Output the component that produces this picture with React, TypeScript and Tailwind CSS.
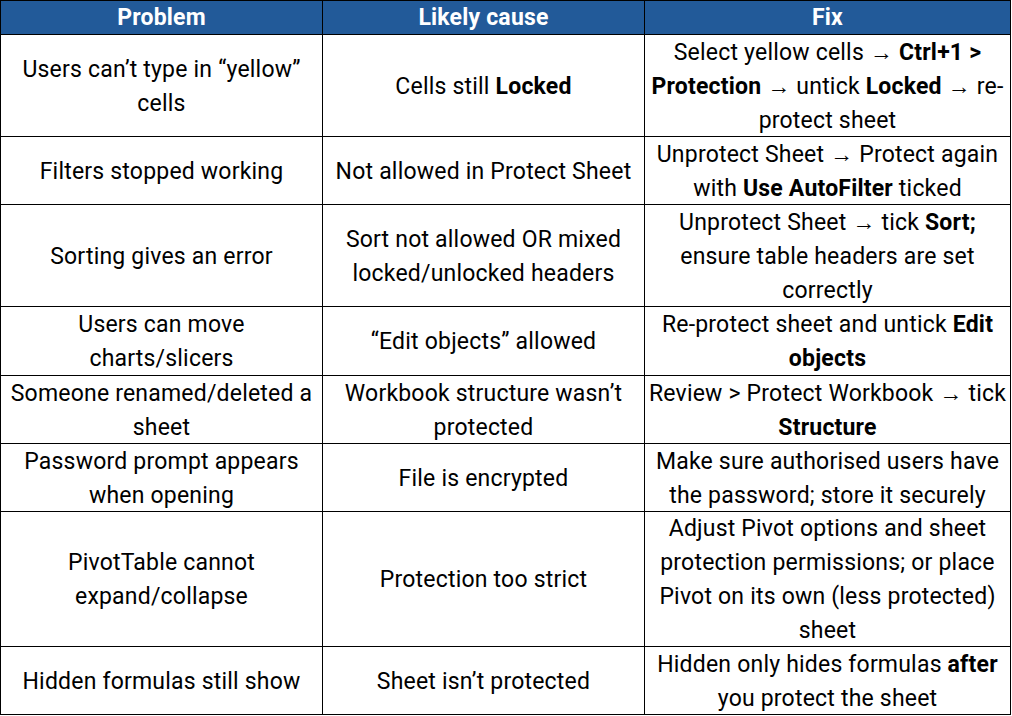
import React from "react";

type Seg = string | { b: string };
type Line = Seg[];

const B = (t: string) => ({ b: t });

const rows: { h: number; p: Line[]; c: Line[]; f: Line[] }[] = [
  {
    h: 102,
    p: [["Users can’t type in “yellow”"], ["cells"]],
    c: [["Cells still ", B("Locked")]],
    f: [
      ["Select yellow cells → ", B("Ctrl+1 >")],
      [B("Protection"), " → untick ", B("Locked"), " → re-"],
      ["protect sheet"],
    ],
  },
  {
    h: 68,
    p: [["Filters stopped working"]],
    c: [["Not allowed in Protect Sheet"]],
    f: [["Unprotect Sheet → Protect again"], ["with ", B("Use AutoFilter"), " ticked"]],
  },
  {
    h: 102,
    p: [["Sorting gives an error"]],
    c: [["Sort not allowed OR mixed"], ["locked/unlocked headers"]],
    f: [["Unprotect Sheet → tick ", B("Sort;")], ["ensure table headers are set"], ["correctly"]],
  },
  {
    h: 69,
    p: [["Users can move"], ["charts/slicers"]],
    c: [["“Edit objects” allowed"]],
    f: [["Re-protect sheet and untick ", B("Edit")], [B("objects")]],
  },
  {
    h: 68,
    p: [["Someone renamed/deleted a"], ["sheet"]],
    c: [["Workbook structure wasn’t"], ["protected"]],
    f: [["Review > Protect Workbook → tick"], [B("Structure")]],
  },
  {
    h: 68,
    p: [["Password prompt appears"], ["when opening"]],
    c: [["File is encrypted"]],
    f: [["Make sure authorised users have"], ["the password; store it securely"]],
  },
  {
    h: 135,
    p: [["PivotTable cannot"], ["expand/collapse"]],
    c: [["Protection too strict"]],
    f: [
      ["Adjust Pivot options and sheet"],
      ["protection permissions; or place"],
      ["Pivot on its own (less protected)"],
      ["sheet"],
    ],
  },
  {
    h: 68,
    p: [["Hidden formulas still show"]],
    c: [["Sheet isn’t protected"]],
    f: [["Hidden only hides formulas ", B("after")], ["you protect the sheet"]],
  },
];

function Cell({ lines, h }: { lines: Line[]; h: number }) {
  return (
    <div
      className="flex flex-col items-center justify-center border-r border-b border-black pt-[2px] text-center"
      style={{ height: h }}
    >
      {lines.map((line, i) => (
        <div key={i} className="whitespace-nowrap leading-[34px]">
          {line.map((s, j) =>
            typeof s === "string" ? (
              <span key={j}>{s}</span>
            ) : (
              <span key={j} className="font-bold">
                {s.b}
              </span>
            )
          )}
        </div>
      ))}
    </div>
  );
}

export default function App() {
  return (
    <div className="w-[1012px] h-[716px] bg-white overflow-hidden">
      <div
        className="grid grid-cols-[322px_322px_366px] w-[1011px] border-l border-t border-black text-[23px] tracking-[0.2px] text-black"
        style={{ fontFamily: "Roboto, 'Noto Sans', sans-serif" }}
      >
        {["Problem", "Likely cause", "Fix"].map((t) => (
          <div
            key={t}
            className="flex h-[34px] items-center justify-center border-r border-b border-black bg-[#225a99] pt-[1px] font-bold text-white"
          >
            {t}
          </div>
        ))}
        {rows.map((r, i) => (
          <React.Fragment key={i}>
            <Cell lines={r.p} h={r.h} />
            <Cell lines={r.c} h={r.h} />
            <Cell lines={r.f} h={r.h} />
          </React.Fragment>
        ))}
      </div>
    </div>
  );
}
